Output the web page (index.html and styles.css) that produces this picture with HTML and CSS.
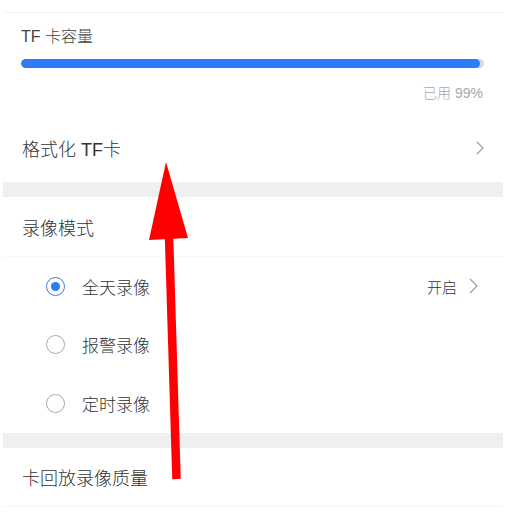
FILE: index.html
```html
<!DOCTYPE html>
<html lang="zh-CN">
<head>
<meta charset="utf-8">
<link rel="stylesheet" href="styles.css">
</head>
<body>
<div class="page">
  <div class="top-gap"></div>
  <section class="capacity">
    <div class="cap-title">TF 卡容量</div>
    <div class="bar"><div class="bar-fill" style="width:99.2%"></div></div>
    <div class="usage">已用 99%</div>
  </section>
  <div class="row format-row">
    <span class="row-title">格式化 TF卡</span>
    <svg class="chev chev-lg" viewBox="0 0 8 14"><path d="M1 1 L7 7 L1 13" fill="none" stroke="#9a9a9a" stroke-width="1.1"/></svg>
  </div>
  <div class="band"></div>
  <div class="row mode-title"><span class="row-title">录像模式</span></div>
  <div class="radio-row first">
    <span class="radio checked"></span>
    <span class="radio-label">全天录像</span>
    <span class="status">开启</span>
    <svg class="chev chev-sm" viewBox="0 0 9 16"><path d="M1 1 L8 8 L1 15" fill="none" stroke="#9a9a9a" stroke-width="1.1"/></svg>
  </div>
  <div class="radio-row">
    <span class="radio"></span>
    <span class="radio-label">报警录像</span>
  </div>
  <div class="radio-row">
    <span class="radio"></span>
    <span class="radio-label">定时录像</span>
  </div>
  <div class="band"></div>
  <div class="row quality-row"><span class="row-title">卡回放录像质量</span></div>
</div>
<svg class="arrow" viewBox="0 0 508 524" width="508" height="524">
  <polygon points="166,162 149,240 188,238" fill="#ff0000"/>
  <line x1="169" y1="236" x2="176.5" y2="479" stroke="#ff0000" stroke-width="8.5"/>
</svg>
</body>
</html>
```
FILE: styles.css
```css
html, body {
  margin: 0;
  padding: 0;
  background: #ffffff;
}
body {
  width: 508px;
  height: 524px;
  position: relative;
  overflow: hidden;
  font-family: "Liberation Sans", "Noto Sans CJK SC", sans-serif;
  font-weight: 300;
  color: #3a3a3a;
}
.page {
  margin: 0 5px 0 3px;
}
.top-gap {
  height: 12px;
}
.capacity {
  border-top: 1px solid #f3f3f3;
  padding: 0 19px 0 18px;
  display: flex;
  flex-direction: column;
}
.cap-title {
  margin-top: 13px;
  font-size: 16px;
  line-height: 22px;
  height: 22px;
  color: #444444;
}
.bar {
  margin-top: 11px;
  height: 9px;
  border-radius: 5px;
  background: #d8d8d8;
  overflow: hidden;
}
.bar-fill {
  height: 100%;
  background: #2f7bf5;
  border-radius: 5px;
}
.usage {
  margin-top: 15px;
  text-align: right;
  font-size: 14px;
  line-height: 20px;
  color: #a8a8a8;
  margin-right: 1px;
}
.row {
  display: flex;
  align-items: center;
  padding: 0 19px;
}
.row-title {
  font-size: 18px;
  color: #333333;
}
.format-row {
  margin-top: 11px;
  height: 68px;
  justify-content: space-between;
}
.chev {
  display: block;
}
.chev-lg {
  width: 8px;
  height: 14px;
}
.band {
  height: 15px;
  background: #efefef;
}
.mode-title {
  height: 59px;
}
.radio-row {
  height: 59px;
  display: flex;
  align-items: center;
  padding: 0 25px 0 43px;
}
.radio-row.first {
  border-top: 1px solid #f8f8f8;
  height: 58px;
}
.radio {
  width: 17px;
  height: 17px;
  border: 1px solid #a8a8a8;
  border-radius: 50%;
  display: flex;
  align-items: center;
  justify-content: center;
}
.radio.checked {
  border-color: #2f7bf5;
}
.radio.checked::after {
  content: "";
  width: 9px;
  height: 9px;
  border-radius: 50%;
  background: #2f7bf5;
}
.radio-label {
  margin-left: 17px;
  font-size: 17px;
  color: #333333;
  flex: 1;
}
.status {
  font-size: 15px;
  color: #333333;
  margin-right: 12px;
}
.chev-sm {
  width: 9px;
  height: 16px;
}
.quality-row {
  height: 58px;
  border-bottom: 1px solid #f5f5f5;
}
.arrow {
  position: absolute;
  left: 0;
  top: 0;
  pointer-events: none;
}
```
